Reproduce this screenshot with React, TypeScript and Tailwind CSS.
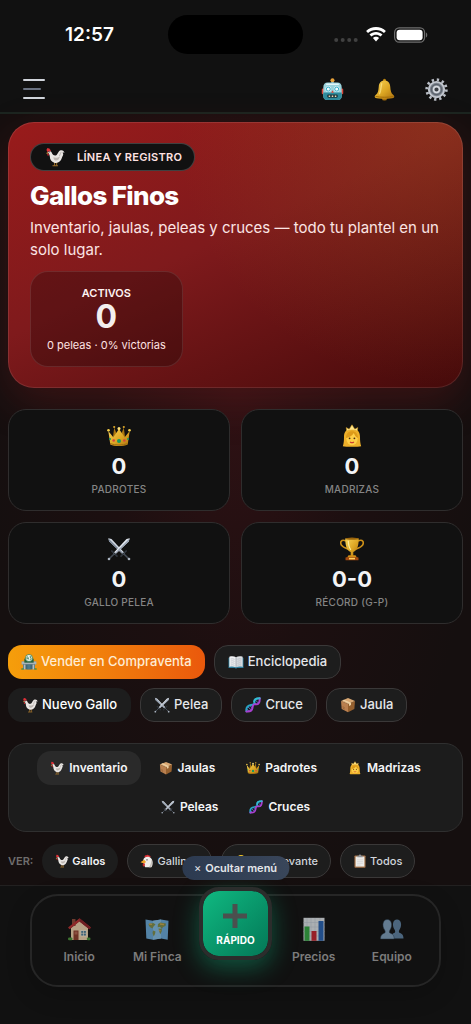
import type { ReactNode } from 'react';

type IconName =
  | 'robot' | 'bell' | 'gear' | 'rooster' | 'crown' | 'princess' | 'swords' | 'trophy' | 'stall' | 'book'
  | 'dna' | 'box' | 'hen' | 'chick' | 'clipboard' | 'house' | 'map' | 'plus' | 'chart' | 'people';

const ICONS: Record<IconName, ReactNode> = {
  robot: (
    <>
      <rect x="0.8" y="11" width="3" height="6" rx="1.2" fill="#d9483b" />
      <rect x="20.2" y="11" width="3" height="6" rx="1.2" fill="#d9483b" />
      <rect x="10.8" y="3" width="2.4" height="3" fill="#8fb8c2" />
      <circle cx="12" cy="2.4" r="2.1" fill="#e9a23a" />
      <path d="M7 4.8h10c3 0 4.6 2 4.6 5v8.6c0 3-1.6 4.6-4.4 4.6H6.8c-2.8 0-4.4-1.6-4.4-4.6V9.8c0-3 1.6-5 4.6-5z" fill="#9bd3dc" />
      <path d="M2.4 15h19.2v3.4c0 3-1.600 4.6-4.4 4.6H6.8c-2.8 0-4.4-1.6-4.4-4.6z" fill="#2f8c9d" />
      <path d="M6 6.500h12" stroke="#e2f6f9" strokeWidth="1.6" strokeLinecap="round" />
      <circle cx="7.6" cy="11.6" r="3" fill="#f0fcff" />
      <circle cx="16.4" cy="11.6" r="3" fill="#f0fcff" />
      <circle cx="7.6" cy="11.6" r="2.1" fill="none" stroke="#22a5c0" strokeWidth="1" />
      <circle cx="16.4" cy="11.6" r="2.1" fill="none" stroke="#22a5c0" strokeWidth="1" />
      <path d="M12 12.8l1.5 2.6h-3z" fill="#d9483b" />
      <rect x="6.5" y="17.3" width="11" height="3.2" rx="1.2" fill="#17343c" />
      <path d="M8 19h1.600M11.2 19h1.6M14.4 19H16" stroke="#f1d9b5" strokeWidth="1.6" />
    </>
  ),
  bell: (
    <>
      <circle cx="12" cy="2.4" r="1.6" fill="#b98310" />
      <ellipse cx="12" cy="21.6" rx="2.6" ry="2" fill="#a86f0c" />
      <path d="M12 2.5c-3.8 0-5.800 2.9-6 6.5-.3 4.4-.9 6.900-3 8.6-1.200 1-1.700 2.300-.7 2.900 3.2 1.5 16.200 1.500 19.4 0 1-.6.5-1.9-.7-2.9-2.1-1.7-2.700-4.200-3-8.600-.2-3.600-2.200-6.500-6-6.500z" fill="url(#gold)" />
      <path d="M9.2 5.500c-1 3.500-.7 8-2.600 11.500" stroke="#fff0a0" strokeWidth="1.4" fill="none" opacity=".6" />
      <path d="M2.6 19.2c4.5 1.2 14.3 1.2 18.800 0" stroke="#a26c08" strokeWidth="1" fill="none" />
    </>
  ),
  gear: (
    <>
      <circle cx="12" cy="12" r="10.2" fill="none" stroke="#b9bec6" strokeWidth="3" strokeDasharray="2.4 2.941" />
      <circle cx="12" cy="12" r="8" fill="#7e858f" stroke="#c2c7cf" strokeWidth="2" />
      <circle cx="12" cy="12" r="5.4" fill="none" stroke="#5c636d" strokeWidth="1.2" />
      <circle cx="12" cy="12" r="3" fill="#3a3e44" stroke="#d7dbe1" strokeWidth="1.6" />
    </>
  ),
  rooster: (
    <>
      <path d="M11.500 18v4.200M14 18v4.200M9 22.500h6.500" stroke="#b9822f" strokeWidth="1" fill="none" />
      <path d="M3.4 6.200c1.600-1.500 3.900-1.300 4.600.5.9 2.600 2.500 3.900 4.800 3.600 2.400-.4 2.700-4.500 5.200-6 2.400-1.400 5 0 5.400 2.900-1.100-.7-1.800-.6-2.300-.2.9 1 1 2.200.4 3.200-.9 1.500-1.300 4-2.800 5.900-1.800 2.400-4.800 3.600-7.600 2.700-3.300-1-5.200-3.900-5.300-7.100 0-1.900-.8-3.700-2.400-5.500z" fill="#e9e6e3" />
      <path d="M10 12.300c2 1 5.500.8 8-1.300-.5 3.300-2.700 5.300-5.200 5.200-1.600-.2-2.500-1.900-2.800-3.900z" fill="#bcb6b1" />
      <path d="M19.800 5.800c-1.500 1.200-1.600 3.500-2.500 5" stroke="#aaa5a1" strokeWidth=".9" fill="none" />
      <path d="M3 6C1.800 4.700 1.600 3 2.400 2.200c.3-1 1.300-1.100 1.800-.4 1-.3 1.700.3 1.700 1.200.9.200 1.200 1.200.9 2.100-1.300 0-2.600 0-3.800.9z" fill="#df3038" />
      <path d="M3 7.700c-.5 1.300-.2 2.600.6 2.900.8.100 1.200-1.400.8-2.900z" fill="#c9242c" />
      <path d="M3.300 6L1.200 7.400l2.300.6z" fill="#e2a83d" />
      <circle cx="5" cy="6" r=".6" fill="#35211c" />
    </>
  ),
  crown: (
    <>
      <path d="M6 13L7.2 3.500l3.300 8.500L12 4l1.500 8 3.300-8.500L18 13z" fill="#a9750f" />
      <path d="M3.3 20.500L1.300 7l5 6.200L12 5l5.700 8.200 5-6.200-2 13.500c-4.500 2-12.900 2-17.400 0z" fill="url(#gold)" />
      <path d="M3.2 19.600c5 1.900 12.600 1.900 17.600 0" stroke="#9d6c10" strokeWidth="1" fill="none" />
      <circle cx="1.5" cy="6.2" r="1.3" fill="#f6cf4a" />
      <circle cx="22.5" cy="6.2" r="1.3" fill="#f6cf4a" />
      <circle cx="7.2" cy="3" r="1.1" fill="#d9a52a" />
      <circle cx="16.8" cy="3" r="1.1" fill="#d9a52a" />
      <circle cx="12" cy="4.5" r="1.5" fill="#ffe27a" />
      <circle cx="12" cy="17" r="2" fill="#169a63" />
      <circle cx="6.7" cy="16.5" r="1.3" fill="#d4453f" />
      <circle cx="17.3" cy="16.5" r="1.3" fill="#d4453f" />
      <circle cx="3" cy="15" r="1" fill="#169a63" />
      <circle cx="21" cy="15" r="1" fill="#169a63" />
    </>
  ),
  princess: (
    <>
      <path d="M12 4.500c-5.800 0-8 3.600-8 8.500 0 4-.3 6.500-1.200 9.200 3 .8 15.400.8 18.400 0C20.300 19.500 20 17 20 13c0-4.900-2.200-8.500-8-8.500z" fill="#eeb02a" />
      <ellipse cx="12" cy="14.600" rx="5.700" ry="6.600" fill="#ffcf47" />
      <path d="M6 14c2.500-.4 6.300-2 7.800-5 .9 2.600 2.300 4.300 4.200 5-.1-4.600-2.200-6.800-6-6.800S6.100 9.400 6 14z" fill="#dd9a1a" />
      <path d="M6.800 7L6.200 3.600l3 1.600L12 .8l2.800 4.400 3-1.600L17.200 7c-3.200-1.300-7.200-1.300-10.400 0z" fill="#ffe68a" stroke="#d79a1c" strokeWidth=".5" />
      <circle cx="9.600" cy="14.300" r=".9" fill="#4c2f12" />
      <circle cx="14.400" cy="14.300" r=".9" fill="#4c2f12" />
      <path d="M10.400 18.200c1 .6 2.200.6 3.200 0" stroke="#cc3d32" strokeWidth="1.200" fill="none" strokeLinecap="round" />
    </>
  ),
  swords: (
    <>
      <path d="M1.300 1.300l3.200.8L18 16.500 16.500 18 2.200 4.500z" fill="#d3dae4" />
      <path d="M1.300 1.300L17.300 17.200 16.500 18 2.200 4.500z" fill="#7e8999" />
      <path d="M22.700 1.300l-3.200.8L6 16.500 7.500 18 21.800 4.500z" fill="#e4e9f0" />
      <path d="M22.700 1.300L6.700 17.200l.8.800L21.800 4.500z" fill="#9aa5b4" />
      <path d="M14 19.200l5.200-5.200M10 19.200L4.800 14" stroke="#2f353d" strokeWidth="1.700" strokeLinecap="round" />
      <path d="M17.200 17.200l4.300 4.300M6.800 17.200l-4.300 4.300" stroke="#454d58" strokeWidth="1.500" />
      <circle cx="22" cy="22" r="1.300" fill="#aab3c0" />
      <circle cx="2" cy="22" r="1.300" fill="#aab3c0" />
    </>
  ),
  trophy: (
    <>
      <path d="M6 4C1 1.700-.2 5.500 1.500 8.200c1.300 2.200 4.200 3 6.800 4M18 4c5-2.300 6.200 1.500 4.500 4.200-1.300 2.200-4.200 3-6.800 4" stroke="#cf9118" strokeWidth="1.600" fill="none" />
      <path d="M5.300 1.500h13.400c0 6.500-1.200 12-5.400 13.500V19h-2.600v-4C6.500 13.500 5.300 8 5.300 1.500z" fill="url(#gold)" />
      <ellipse cx="12" cy="1.700" rx="6.700" ry="1.100" fill="#9b650b" />
      <path d="M8.300 3.800c.1 4 .9 7 2.500 9" stroke="#ffed9b" strokeWidth="1.200" fill="none" />
      <path d="M8.500 18.200h7l1.500 2.500H7z" fill="#d28d14" />
      <rect x="5.500" y="20.300" width="13" height="3" rx=".6" fill="#a3480f" />
      <rect x="9" y="20.800" width="6" height="1.600" fill="#ffd05e" />
    </>
  ),
  stall: (
    <>
      <rect x="1" y="11" width="22" height="5" fill="#8f9ba0" />
      <path d="M1 12.500h22M1 14.500h22" stroke="#ccd3d4" strokeWidth=".8" />
      <rect x="3" y="15" width="18" height="8" fill="#6f8287" />
      <path d="M5.500 16v7M18.500 16v7" stroke="#c6d1d2" strokeWidth="1.400" />
      <rect x="8" y="16" width="8" height="7" fill="#2e5a6c" />
      <path d="M10.600 16v7M13.400 16v7" stroke="#a3d0de" strokeWidth=".7" />
      <path d="M5 7h14v6H5z" fill="#27613f" />
      <circle cx="12" cy="6" r="5.300" fill="#eef3ec" stroke="#2f7a4f" strokeWidth="1.100" />
      <path d="M9.800 3.500L8.500 6.500h3M10.800 5v3.500M13 4h2.200L14 6c2 0 1.800 2.500-.8 2.300" stroke="#26724a" strokeWidth="1" fill="none" />
      <rect x="0.500" y="21.500" width="3.500" height="2" fill="#3d8c46" />
      <rect x="20" y="21.500" width="3.500" height="2" fill="#3d8c46" />
    </>
  ),
  book: (
    <>
      <path d="M.8 5.500h22.400V21H13.500L12 22l-1.500-1H.8z" fill="#2e7d9c" />
      <path d="M2 4c3.500-1 7.500-.8 10 .8V20c-3-1.300-6.500-1.400-10-.6z" fill="#f1f2f4" />
      <path d="M22 4c-3.500-1-7.500-.8-10 .8V20c3-1.300 6.500-1.400 10-.6z" fill="#dcdfe3" />
      <path d="M4 7.500c2-.4 4-.3 6 .4M4 10.500c2-.4 4-.3 6 .4M4 13.500c2-.4 4-.3 6 .4M4 16.500c2-.4 4-.3 6 .4M14 7.900c2-.7 4-.8 6-.4M14 10.900c2-.7 4-.8 6-.4M14 13.900c2-.7 4-.8 6-.4M14 16.900c2-.7 4-.8 6-.4" stroke="#a4abb4" strokeWidth=".9" fill="none" />
      <path d="M12 4.800V20" stroke="#7d858f" strokeWidth=".9" />
    </>
  ),
  dna: (
    <>
      <path d="M4 14.500l5.500 5M7 12.500l4.500 4.500M13 7l4 4M15 4l5 5M2.500 17.500l3 3.500" stroke="#5b6fd6" strokeWidth="1.400" />
      <path d="M2.200 21.500c-1.200-6.500 2.800-9 6.800-9.500 5-.6 5.500-2 5-4.500C13.500 4 16 1.800 22 2" stroke="#27a5c4" strokeWidth="3" fill="none" strokeLinecap="round" />
      <path d="M2.200 21.700c6.500.8 8.700-2 9.200-6.400.5-4.600 2.600-4.700 5.100-4.300 3.500.4 6-3 5.500-9" stroke="#a83fd0" strokeWidth="3" fill="none" strokeLinecap="round" />
      <path d="M14 7.500C13.500 4 16 1.800 22 2" stroke="#35bcd2" strokeWidth="2.600" fill="none" strokeLinecap="round" />
    </>
  ),
  box: (
    <>
      <path d="M1.500 6L12 10.500V23L2.500 18z" fill="#b98050" />
      <path d="M22.500 6L12 10.500V23l9.500-5z" fill="#95602f" />
      <path d="M1.500 6L12 1.500 22.500 6 12 10.500z" fill="#d9a873" />
      <path d="M6 4l10.500 4.600v3.500l-3 1.300V10L3.800 5z" fill="#ecd0a4" />
      <path d="M4 14.500l3 1.600M4 16.500l3 1.600" stroke="#7f5026" strokeWidth=".8" />
    </>
  ),
  hen: (
    <>
      <path d="M8 6c-.6-3 1-4.500 2.800-3.700C12 .5 14.500.8 15 2.700c2-.5 3.500 1 3 3z" fill="#dc3035" />
      <path d="M5.500 11C6 6.500 9 4.500 13 4.500c5.500 0 8.500 4.500 8.700 9.500.2 4.500-1 7-2.200 8.500H9C7 19 5 15.500 5.500 11z" fill="#f0eeeb" />
      <path d="M19.500 9c2 4 1.500 9-.5 13.500h-4c3-3 4.500-7.500 4.500-13.500z" fill="#c6c0ba" />
      <path d="M7 10L.8 14l6.200 2.200 3.500-2.700z" fill="#f0a52b" />
      <path d="M5.500 16c-1.300 2-1.300 4.500.3 5.300 1.800.6 3.200-1.800 2.400-5z" fill="#cf282d" />
      <circle cx="12" cy="10" r="1.200" fill="#2d211e" />
    </>
  ),
  chick: (
    <>
      <circle cx="12" cy="9" r="7.500" fill="#f6c928" />
      <ellipse cx="12" cy="16.500" rx="9" ry="6" fill="#efb81f" />
      <path d="M10 9.500h4L12 12z" fill="#e37a1b" />
      <circle cx="8.800" cy="7.800" r="1" fill="#2d211e" />
      <circle cx="15.200" cy="7.800" r="1" fill="#2d211e" />
    </>
  ),
  clipboard: (
    <>
      <rect x="2.500" y="2.500" width="19" height="21" rx="1.500" fill="#a6744a" />
      <rect x="4.500" y="4.500" width="15" height="17" fill="#ecebe8" />
      <path d="M7 10h10M7 13h10M7 16h10M7 19h6" stroke="#c4c5c7" strokeWidth=".8" />
      <path d="M7.500 5.500V3H10a2 2 0 014 0h2.500v2.500z" fill="#8e9298" />
    </>
  ),
  house: (
    <>
      <path d="M4 11L12.500 4 21 11v12H4z" fill="#efd3ad" />
      <rect x="5" y="2" width="3.500" height="7" fill="#8d4a38" />
      <path d="M12.500 1.300L24 10.500l-1.600 1.800L12.500 4.500 2.600 12.300 1 10.500z" fill="#b93232" />
      <path d="M12.500 1.300L24 10.500l-1.600 1.800L12.500 4.500z" fill="#8e2328" />
      <rect x="6.500" y="13.500" width="5" height="9.500" fill="#8c3d2b" />
      <rect x="7.500" y="14.500" width="3" height="3" fill="#b46550" />
      <rect x="13.800" y="13.500" width="5.500" height="5.500" fill="#4e7d99" stroke="#fff0d8" strokeWidth=".8" />
      <path d="M16.500 13.500V19M13.800 16.300h5.500" stroke="#fff0d8" strokeWidth=".6" />
      <rect x="1" y="20.500" width="4.500" height="2.700" rx="1.200" fill="#4b943b" />
      <rect x="19.800" y="20.500" width="3.700" height="2.700" rx="1.200" fill="#4b943b" />
    </>
  ),
  map: (
    <>
      <path d="M.5 2.500L8 3.800l8-1.300 7.500 1.300-.8 19L16 21.500l-8 1.300-6.700-1.300z" fill="#6aa9d8" />
      <path d="M8 3.800l8-1.300v19l-8 1.300z" fill="#84bde4" />
      <path d="M3.500 7l5-1 2 1.500-2 2-1 2-2-1-1.500-1.500zM8 13.500l2.500 1-.5 2.500-1.300 2.500-1.200-3.500zM13 7l2.500-1.500 5.500 1-.5 2.500-2.500 1-1 1.800-2-1.800-2.300.3zM13.500 11.500l3.300.3v2.500l-1.500 3-1-2.500z" fill="#7f8f4c" />
      <path d="M4 7l3 .3M15 7l4 .5M14 13l1.500 1" stroke="#c9a84e" strokeWidth="1.300" />
    </>
  ),
  plus: <path d="M9.500 0h5v9.500H24v5h-9.500V24h-5v-9.500H0v-5h9.500z" fill="#4b4f4e" />,
  chart: (
    <>
      <rect x="1.500" y=".8" width="21" height="23" fill="#dfe4e8" />
      <path d="M1.500 5.500h21M1.500 10h21M1.500 14.500h21M1.500 19h21M5 1v22M9 1v22M13 1v22M18 1v22" stroke="#b8c4d0" strokeWidth=".5" />
      <rect x="2.500" y="9.500" width="5" height="14.300" fill="#35a844" />
      <rect x="9.500" y="14" width="5" height="9.800" fill="#c62631" />
      <rect x="16.500" y="4" width="5" height="19.800" fill="#2863b1" />
    </>
  ),
  people: (
    <>
      <path d="M10.500 21.500c0-4 2-5 4.300-5.800.6-.8.500-2-.3-3.200-2.700-4-1.800-10 2.500-10s5.300 6 2.600 10c-.8 1.200-.9 2.400-.3 3.200 2.500.8 4.200 2 4.200 5.800z" fill="#5f82a2" />
      <path d="M.5 22c0-4 2-5.200 4.300-6 .6-.8.500-2-.3-3.200C1.800 8.800 2.700 2.500 7.300 2.500s5.500 6.300 2.800 10.300c-.8 1.200-.9 2.400-.3 3.200 2.400.8 4.400 2 4.400 6z" fill="#7f9fbb" stroke="#263b4f" strokeWidth=".5" />
    </>
  ),
};

function Icon({ name, className }: { name: IconName; className: string }) {
  return (
    <svg viewBox="0 0 24 24" className={`shrink-0 ${className}`} aria-hidden="true">
      <defs>
        <linearGradient id="gold" x1="0" x2="1" y1="0" y2="1">
          <stop offset="0" stopColor="#f8d456" />
          <stop offset=".55" stopColor="#dca623" />
          <stop offset="1" stopColor="#ad7210" />
        </linearGradient>
      </defs>
      {ICONS[name]}
    </svg>
  );
}

function StatusBar() {
  return (
    <div className="grid grid-cols-3 items-center pt-[15px]">
      <span className="pl-[22px] text-center text-[19px] leading-6 font-semibold text-white">12:57</span>
      <div className="mx-auto h-[39px] w-[135px] rounded-full bg-black" />
      <div className="flex items-center justify-center gap-2 pr-6">
        <svg viewBox="0 0 24 6" className="mt-2.5 h-1.5 w-6" fill="#414141" aria-hidden="true">
          <circle cx="2.2" cy="3" r="2" />
          <circle cx="8.7" cy="3" r="2" />
          <circle cx="15.2" cy="3" r="2" />
          <circle cx="21.7" cy="3" r="2" />
        </svg>
        <svg viewBox="0 0 20 15" className="h-[15px] w-5" fill="#fff" aria-hidden="true">
          <path d="M10 0C6.200 0 2.700 1.400.1 3.900l1.900 2C4.100 4 6.900 2.900 10 2.900S15.900 4 18 5.900l1.900-2C17.300 1.400 13.800 0 10 0z" />
          <path d="M10 5C7.500 5 5.200 5.900 3.500 7.500l2 2C6.700 8.400 8.300 7.800 10 7.800s3.300.6 4.500 1.700l2-2C14.800 5.900 12.500 5 10 5z" />
          <path d="M10 9.700c-1.200 0-2.300.5-3.100 1.200L10 14.500l3.100-3.600c-.8-.7-1.900-1.200-3.100-1.200z" />
        </svg>
        <svg viewBox="0 0 34 16" className="h-4 w-[34px]" aria-hidden="true">
          <rect x=".6" y=".8" width="30" height="14.400" rx="4.600" fill="none" stroke="#6f6f6f" strokeWidth="1.200" />
          <rect x="2.600" y="2.800" width="26" height="10.400" rx="3" fill="#fff" />
          <path d="M32 5.500c1.700.7 1.700 4.300 0 5z" fill="#6f6f6f" />
        </svg>
      </div>
    </div>
  );
}

function Header() {
  const actions: { icon: IconName; label: string }[] = [
    { icon: 'robot', label: 'Asistente' },
    { icon: 'bell', label: 'Notificaciones' },
    { icon: 'gear', label: 'Ajustes' },
  ];
  return (
    <header className="border-b-2 border-[#1b2520] bg-[#111111]">
      <StatusBar />
      <div className="flex h-[58px] items-center justify-between pt-3.5 pr-[23px] pb-0.5 pl-[23px]">
        <button type="button" aria-label="Menú" className="flex flex-col gap-[7px]">
          <span className="h-0.5 w-[22px] rounded bg-gray-300" />
          <span className="h-0.5 w-[18px] rounded bg-gray-500" />
          <span className="h-0.5 w-[22px] rounded bg-gray-300" />
        </button>
        <div className="flex gap-[29px]">
          {actions.map((a) => (
            <button key={a.icon} type="button" aria-label={a.label}>
              <Icon name={a.icon} className="size-[23px]" />
            </button>
          ))}
        </div>
      </div>
    </header>
  );
}

function Hero() {
  return (
    <section className="rounded-[26px] border border-white/10 bg-[radial-gradient(circle_at_95%_0%,rgba(160,95,30,0.3),transparent_52%),linear-gradient(155deg,#991b1b_0%,#7f1a1c_45%,#450a0a_100%)] bg-origin-border px-[21px] py-5 shadow-[0_14px_40px_rgba(127,29,29,0.3)]">
      <div className="inline-flex h-7 items-center gap-3 rounded-full border border-white/20 bg-[#111111] pr-3 pl-3.5 align-top">
        <Icon name="rooster" className="size-5" />
        <span className="text-[11px] font-semibold tracking-wide text-red-100">LÍNEA Y REGISTRO</span>
      </div>
      <h1 className="mt-2.5 text-[26px] leading-[30px] font-extrabold tracking-tight text-white">Gallos Finos</h1>
      <p className="mt-1.5 text-[15px] leading-[22px] text-[#fbe4e4]">
        Inventario, jaulas, peleas y cruces — todo tu plantel en un solo lugar.
      </p>
      <div className="mt-2.5 inline-flex h-24 flex-col items-center justify-center rounded-[18px] border border-white/10 bg-black/25 px-4 align-top">
        <span className="text-[11px] leading-4 font-semibold text-red-50">ACTIVOS</span>
        <span className="text-[32px] leading-8 font-bold text-[#f3eeee]">0</span>
        <span className="mt-1 text-[11px] leading-4 text-red-100">0 peleas · 0% victorias</span>
      </div>
    </section>
  );
}

function StatCard({ icon, value, label }: { icon: IconName; value: string; label: string }) {
  return (
    <div className="flex flex-col items-center rounded-[18px] border border-[#2f2d2d] bg-[#111111] py-3.5">
      <Icon name={icon} className="size-6" />
      <span className="mt-1.5 text-[22px] leading-6 font-bold text-gray-100">{value}</span>
      <span className="mt-1 text-[10px] leading-3.5 font-medium tracking-wide text-[#858585]">{label}</span>
    </div>
  );
}

function ActionChip({ icon, label, className }: { icon: IconName; label: string; className: string }) {
  return (
    <button
      type="button"
      className={`flex h-[34px] items-center gap-1 rounded-[14px] border text-[13px] font-medium ${className}`}
    >
      <Icon name={icon} className="size-4" />
      {label}
    </button>
  );
}

const CHIP = 'border-[#3a3838] bg-[#1d1d1d] px-[13px] text-gray-200';

const TABS: { icon: IconName; label: string }[] = [
  { icon: 'rooster', label: 'Inventario' },
  { icon: 'box', label: 'Jaulas' },
  { icon: 'crown', label: 'Padrotes' },
  { icon: 'princess', label: 'Madrizas' },
  { icon: 'swords', label: 'Peleas' },
  { icon: 'dna', label: 'Cruces' },
];

const FILTERS: { icon: IconName; label: string }[] = [
  { icon: 'rooster', label: 'Gallos' },
  { icon: 'hen', label: 'Gallinas' },
  { icon: 'chick', label: 'Pollo levante' },
  { icon: 'clipboard', label: 'Todos' },
];

function NavItem({ icon, label }: { icon: IconName; label: string }) {
  return (
    <a href="#" className="flex flex-col items-center gap-2 text-xs leading-4 font-semibold text-[#7c7c7c]">
      <Icon name={icon} className="size-6 opacity-75" />
      {label}
    </a>
  );
}

function BottomNav() {
  return (
    <nav className="relative mt-auto border-t border-[#222020] bg-[#111111] px-[30px] pt-2 pb-[37px]">
      <button
        type="button"
        className="absolute -top-[30px] left-1/2 flex h-6 -translate-x-1/2 items-center gap-1 rounded-full bg-linear-to-r from-[#2c3a50] to-[#39465a] px-3 text-[11px] font-semibold whitespace-nowrap text-gray-200"
      >
        <span className="font-normal">×</span>Ocultar menú
      </button>
      <div className="grid h-[93px] grid-cols-5 items-center rounded-[28px] border-2 border-[#262626] px-2 shadow-[0_8px_24px_rgba(0,0,0,0.2)]">
        <NavItem icon="house" label="Inicio" />
        <NavItem icon="map" label="Mi Finca" />
        <button
          type="button"
          className="-mt-[34px] flex size-[73px] flex-col items-center justify-center gap-1.5 justify-self-center rounded-[20px] border-4 border-[#2b2d2c] bg-linear-to-br from-[#10b981] to-[#047857] bg-clip-padding pt-0.5 text-[10px] leading-3 font-bold text-white shadow-[0_8px_24px_rgba(16,185,129,0.4)]"
        >
          <Icon name="plus" className="size-6" />
          RÁPIDO
        </button>
        <NavItem icon="chart" label="Precios" />
        <NavItem icon="people" label="Equipo" />
      </div>
    </nav>
  );
}

export default function App() {
  return (
    <div className="flex min-h-screen flex-col bg-[#150f0f] font-['Inter',sans-serif]">
      <Header />
      <main className="bg-[radial-gradient(ellipse_at_50%_35%,#301114_0%,#1c0f10_40%,#150f0f_75%)] px-2 pt-2 pb-[7px]">
        <Hero />

        <div className="mt-[21px] grid grid-cols-2 gap-[11px]">
          <StatCard icon="crown" value="0" label="PADROTES" />
          <StatCard icon="princess" value="0" label="MADRIZAS" />
          <StatCard icon="swords" value="0" label="GALLO PELEA" />
          <StatCard icon="trophy" value="0-0" label="RÉCORD (G-P)" />
        </div>

        <div className="mt-[21px] flex flex-col gap-[9px]">
          <div className="flex flex-wrap gap-[9px]">
            <ActionChip
              icon="stall"
              label="Vender en Compraventa"
              className="border-transparent bg-linear-to-r from-[#f59e0b] to-[#ea580c] bg-origin-border px-3 text-orange-100"
            />
            <ActionChip icon="book" label="Enciclopedia" className={CHIP} />
          </div>
          <div className="flex flex-wrap gap-[9px]">
            <ActionChip icon="rooster" label="Nuevo Gallo" className="border-transparent bg-[#1d1d1d] px-[13px] text-white" />
            <ActionChip icon="swords" label="Pelea" className={CHIP} />
            <ActionChip icon="dna" label="Cruce" className={CHIP} />
            <ActionChip icon="box" label="Jaula" className={CHIP} />
          </div>
        </div>

        <div className="mt-[21px] flex flex-wrap justify-center gap-[5px] rounded-[18px] border border-[#2f2f2f] bg-[#1c1c1c] px-5 py-[7px]">
          {TABS.map((tab, i) => (
            <button
              key={tab.label}
              type="button"
              className={`flex h-[34px] items-center gap-[5px] rounded-[14px] px-[13px] text-xs font-semibold text-gray-100 ${
                i === 0 ? 'bg-[#2a2a2a]' : ''
              }`}
            >
              <Icon name={tab.icon} className="size-3.5" />
              {tab.label}
            </button>
          ))}
        </div>

        <div className="mt-3 flex items-center gap-[9px]">
          <span className="text-[11px] font-semibold text-[#6f6d6d]">VER:</span>
          {FILTERS.map((filter, i) => (
            <button
              key={filter.label}
              type="button"
              className={`flex h-[34px] items-center gap-[3px] rounded-full border px-3 text-[11px] whitespace-nowrap ${
                i === 0
                  ? 'border-transparent bg-[#1d1d1d] font-semibold text-gray-100'
                  : 'border-[#3a3838] bg-[#1d1d1d] font-medium text-gray-300'
              }`}
            >
              <Icon name={filter.icon} className="size-3.5" />
              {filter.label}
            </button>
          ))}
        </div>
      </main>
      <BottomNav />
    </div>
  );
}
